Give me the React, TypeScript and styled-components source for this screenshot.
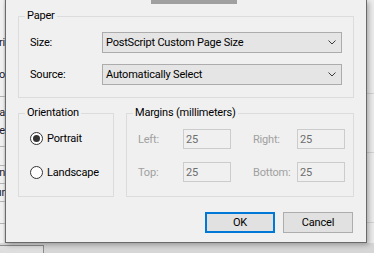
import React from "react";
import styled, { createGlobalStyle, css } from "styled-components";

const Global = createGlobalStyle`
  html, body { margin: 0; padding: 0; }
  body {
    width: 374px;
    height: 253px;
    overflow: hidden;
    background: #dcdcdc;
    font-family: Roboto, "Liberation Sans", sans-serif;
    font-size: 11px;
    letter-spacing: -0.2px;
    color: #000;
  }
  * { box-sizing: border-box; }
`;

const Frame = styled.div`
  width: 374px;
  height: 253px;
  display: flex;
  flex-direction: column;
  overflow: hidden;
`;

const TopRow = styled.div`
  display: flex;
  height: 243px;
`;

const LeftStrip = styled.div`
  width: 5px;
  display: flex;
  flex-direction: column;
  background: linear-gradient(to right, #f0f0f0 0, #f0f0f0 3px, #d2d2d2 5px);
  overflow: hidden;
`;

const LeftCell = styled.div<{ $h: number; $line?: boolean }>`
  height: ${(p) => p.$h}px;
  flex: none;
  display: flex;
  align-items: center;
  justify-content: flex-end;
  white-space: nowrap;
  color: #1a1a2a;
  ${(p) =>
    p.$line &&
    css`
      border-bottom: 1px solid #b4b4b4;
    `}
`;

const Dialog = styled.div`
  position: relative;
  z-index: 1;
  width: 362px;
  height: 243px;
  flex: none;
  background: #f0f0f0;
  border: 1px solid #6a6a6a;
  border-top: none;
  box-shadow: 2px 2px 5px rgba(0, 0, 0, 0.28);
  padding: 0 12px 9px 12px;
  display: flex;
  flex-direction: column;
`;

const TopBar = styled.div`
  height: 4px;
  display: flex;
`;

const TopBarBlock = styled.div`
  margin-left: 133px;
  width: 86px;
  height: 4px;
  background: #a0a0a0;
`;

const Group = styled.div<{ $w?: number; $h: number }>`
  position: relative;
  border: 1px solid #dcdcdc;
  height: ${(p) => p.$h}px;
  ${(p) =>
    p.$w &&
    css`
      width: ${p.$w}px;
      flex: none;
    `}
`;

const Legend = styled.span`
  position: absolute;
  top: -9px;
  left: 6px;
  padding: 0 2px;
  background: #f0f0f0;
  line-height: 16px;
  color: #000;
  white-space: nowrap;
`;

const PaperGroup = styled(Group)`
  margin-top: 12px;
  padding: 15px 11px 0 11px;
  display: flex;
  flex-direction: column;
  gap: 11px;
`;

const FieldRow = styled.div`
  display: flex;
  align-items: center;
  height: 21px;
`;

const FieldLabel = styled.span`
  width: 72px;
  flex: none;
`;

const Select = styled.div`
  flex: 1;
  height: 21px;
  background: #e5e5e5;
  border: 1px solid #acacac;
  display: flex;
  align-items: center;
  justify-content: space-between;
  padding: 0 5px 0 3px;
`;

const Chevron = () => (
  <svg width="8" height="5" viewBox="0 0 8 5">
    <path d="M0.5 0.5 L4 4 L7.5 0.5" fill="none" stroke="#3c3c3c" strokeWidth="1" />
  </svg>
);

const LowerRow = styled.div`
  margin-top: 15px;
  display: flex;
  gap: 12px;
`;

const OrientGroup = styled(Group)`
  padding: 17px 0 0 11px;
  display: flex;
  flex-direction: column;
  gap: 19px;
`;

const RadioRow = styled.label`
  display: flex;
  align-items: center;
  gap: 4px;
  height: 15px;
`;

const RadioDot = styled.span<{ $checked?: boolean }>`
  position: relative;
  width: 13px;
  height: 13px;
  flex: none;
  border-radius: 50%;
  border: 1px solid #333;
  background: #fff;
  ${(p) =>
    p.$checked &&
    css`
      &::after {
        content: "";
        position: absolute;
        left: 2px;
        top: 2px;
        width: 7px;
        height: 7px;
        border-radius: 50%;
        background: #333;
      }
    `}
`;

const MarginGroup = styled(Group)`
  padding: 15px 0 0 11px;
  display: grid;
  grid-template-columns: 45px 48px 22px 44px 48px;
  grid-auto-rows: 20px;
  row-gap: 13px;
  align-content: start;
`;

const DisabledLabel = styled.span<{ $col: number }>`
  grid-column: ${(p) => p.$col};
  display: flex;
  align-items: center;
  color: #a0a0a0;
`;

const NumInput = styled.div<{ $col: number }>`
  grid-column: ${(p) => p.$col};
  height: 20px;
  border: 1px solid #cccccc;
  background: #f0f0f0;
  color: #6d6d6d;
  display: flex;
  align-items: center;
  padding-left: 2px;
`;

const ButtonRow = styled.div`
  margin-top: 15px;
  display: flex;
  justify-content: flex-end;
  gap: 8px;
  padding-right: 1px;
`;

const Button = styled.button<{ $default?: boolean }>`
  width: 70px;
  height: 21px;
  padding: 0;
  font: inherit;
  letter-spacing: inherit;
  color: #000;
  background: #e1e1e1;
  border: 1px solid #adadad;
  ${(p) =>
    p.$default &&
    css`
      border: 2px solid #0078d7;
    `}
`;

const RightStrip = styled.div`
  flex: 1;
  display: flex;
  flex-direction: column;
  background: #ececec;
`;

const RightCell = styled.div<{ $h: number }>`
  height: ${(p) => p.$h}px;
  flex: none;
  border-bottom: 1px solid #d2d2d2;
`;

const BottomStrip = styled.div`
  flex: 1;
  background: #d6d6d6;
  padding-top: 2px;
`;

const BottomBox = styled.div`
  width: 44px;
  height: 100%;
  border-top: 1px solid #8c8c8c;
  border-right: 1px solid #8c8c8c;
  background: #dedede;
`;

const leftCells: { h: number; t?: string; line?: boolean }[] = [
  { h: 31 },
  { h: 22, t: "Pri" },
  { h: 10 },
  { h: 22, t: "Co" },
  { h: 12, line: true },
  { h: 6 },
  { h: 18, t: "Sta" },
  { h: 18, t: "Ste" },
  { h: 8, line: true },
  { h: 19, line: true },
  { h: 12, t: "n" },
  { h: 6, line: true },
  { h: 18, t: "ur", line: true },
  { h: 22, line: true },
];

export default function App() {
  return (
    <>
      <Global />
      <Frame>
        <TopRow>
          <LeftStrip>
            {leftCells.map((c, i) => (
              <LeftCell key={i} $h={c.h} $line={c.line}>
                {c.t}
              </LeftCell>
            ))}
          </LeftStrip>
          <Dialog>
            <TopBar>
              <TopBarBlock />
            </TopBar>
            <PaperGroup $h={82}>
              <Legend>Paper</Legend>
              <FieldRow>
                <FieldLabel>Size:</FieldLabel>
                <Select>
                  <span>PostScript Custom Page Size</span>
                  <Chevron />
                </Select>
              </FieldRow>
              <FieldRow>
                <FieldLabel>Source:</FieldLabel>
                <Select>
                  <span>Automatically Select</span>
                  <Chevron />
                </Select>
              </FieldRow>
            </PaperGroup>
            <LowerRow>
              <OrientGroup $w={96} $h={84}>
                <Legend>Orientation</Legend>
                <RadioRow>
                  <RadioDot $checked />
                  Portrait
                </RadioRow>
                <RadioRow>
                  <RadioDot />
                  Landscape
                </RadioRow>
              </OrientGroup>
              <MarginGroup $w={228} $h={84}>
                <Legend>Margins (millimeters)</Legend>
                <DisabledLabel $col={1}>Left:</DisabledLabel>
                <NumInput $col={2}>25</NumInput>
                <DisabledLabel $col={4}>Right:</DisabledLabel>
                <NumInput $col={5}>25</NumInput>
                <DisabledLabel $col={1}>Top:</DisabledLabel>
                <NumInput $col={2}>25</NumInput>
                <DisabledLabel $col={4}>Bottom:</DisabledLabel>
                <NumInput $col={5}>25</NumInput>
              </MarginGroup>
            </LowerRow>
            <ButtonRow>
              <Button $default>OK</Button>
              <Button>Cancel</Button>
            </ButtonRow>
          </Dialog>
          <RightStrip>
            <RightCell $h={94} />
            <RightCell $h={59} />
            <RightCell $h={70} />
          </RightStrip>
        </TopRow>
        <BottomStrip>
          <BottomBox />
        </BottomStrip>
      </Frame>
    </>
  );
}
